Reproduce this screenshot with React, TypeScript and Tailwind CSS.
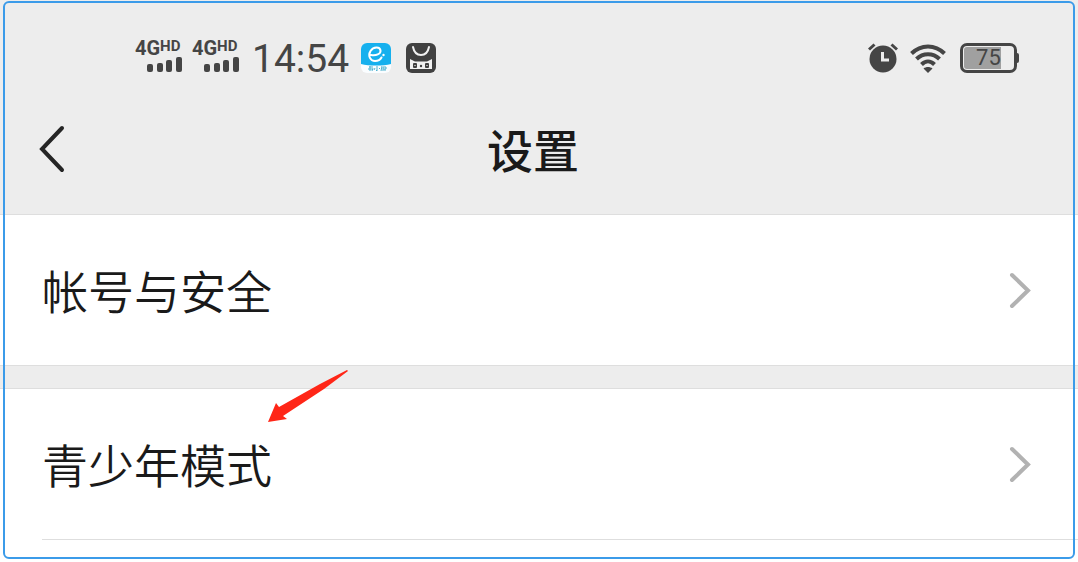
const SignalIcon = () => (
  <div className="flex w-12 flex-col pb-1">
    <div className="flex items-start font-bold">
      <span className="text-[20px] leading-4">4G</span>
      <span className="text-[15px] leading-3">HD</span>
    </div>
    <svg width="48" height="16" viewBox="0 0 48 16" fill="currentColor" aria-hidden="true">
      <rect x="12" y="8" width="6" height="8" rx="2" />
      <rect x="22" y="7" width="6" height="9" rx="2" />
      <rect x="31" y="4" width="6" height="12" rx="2" />
      <rect x="41" y="1" width="6" height="15" rx="2" />
    </svg>
  </div>
)

const CloudAppIcon = () => (
  <svg width="30" height="30" viewBox="0 0 30 30" aria-hidden="true">
    <rect width="30" height="30" rx="6" fill="#fafdff" />
    <path d="M6 0h18a6 6 0 0 1 6 6v15c-8 2-22 2-30 0V6a6 6 0 0 1 6-6z" fill="#16b0ee" />
    <path d="M10 12c5 1 10-1 9.500-4.500C19 3.500 12.500 3.500 9.500 8C6.500 13 9.500 18 14 18c3 0 5.500-1.500 6.500-3.500" fill="none" stroke="#fff" strokeWidth="2" strokeLinecap="round" />
    <circle cx="22.500" cy="12" r="1.200" fill="#fff" />
    <path d="M8 24h4M9 23v5M7 26h4M12 25l-1 3M16 23v5l-1-1M14 25l-1 2M18 25l1 1M21 23l-1 5M22 24h3v2h-3zM21 27h4" fill="none" stroke="#4fb3d0" strokeWidth="1" />
  </svg>
)

const BagAppIcon = () => (
  <svg width="30" height="30" viewBox="0 0 30 30" aria-hidden="true">
    <rect width="30" height="30" rx="6" fill="#414141" />
    <path d="M7 4c1 5 4 8 8 8s7-3 8-8" fill="none" stroke="#f2f2f2" strokeWidth="2" strokeLinecap="round" />
    <path d="M4 16l5 2.500h12l5-2.500v10H4z" fill="#f2f2f2" />
    <rect x="7" y="20" width="4" height="5" rx="1" fill="#414141" />
    <rect x="19" y="20" width="4" height="5" rx="1" fill="#414141" />
    <path d="M8 22.500h2M20 22.500h2" stroke="#a8a8a8" />
    <circle cx="15" cy="23" r="1.200" fill="#414141" />
  </svg>
)

const AlarmIcon = () => (
  <svg width="30" height="30" viewBox="0 0 30 30" fill="none" stroke="#454545" aria-hidden="true">
    <circle cx="15" cy="16" r="13.500" fill="#454545" stroke="none" />
    <path d="M1 6.500l5.500-5M23.500 1.500l5.500 5" strokeWidth="3" />
    <path d="M14.500 9v8h6.500" stroke="#ededed" strokeWidth="3" />
  </svg>
)

const WifiIcon = () => (
  <svg width="36" height="30" viewBox="0 0 36 30" fill="none" stroke="#454545" strokeWidth="4" aria-hidden="true">
    <path d="M1.500 10.500C11 1 25 1 34.500 10.500" />
    <path d="M6.500 16c6.500-6.500 16.500-6.500 23 0" />
    <path d="M11.500 21.500c4-4 9-4 13 0" />
    <path d="M18 30l-4.500-4.500c2.500-2 6.500-2 9 0z" fill="#454545" stroke="none" />
  </svg>
)

const Battery = () => (
  <div className="flex items-center">
    <div className="flex h-[30px] w-[57px] rounded-[7px] border-3 border-[#454545] p-px">
      <div className="flex w-3/4 items-center justify-end rounded-l-[3px] bg-[#a0a0a0] text-[22px] leading-6">75</div>
    </div>
    <span className="h-[10px] w-[2px] rounded-r-sm bg-[#454545]" />
  </div>
)

const StatusBar = () => (
  <div className="flex h-20 items-center justify-between pt-9 pr-[59px] pl-[135px] font-[Roboto,sans-serif] text-[#454545]">
    <div className="flex items-center">
      <div className="flex gap-[9px]">
        <SignalIcon />
        <SignalIcon />
      </div>
      <span className="mr-3 ml-3 pt-[2px] text-[39px] leading-10">14:54</span>
      <div className="flex gap-[15px]">
        <CloudAppIcon />
        <BagAppIcon />
      </div>
    </div>
    <div className="flex items-center">
      <AlarmIcon />
      <span className="ml-3">
        <WifiIcon />
      </span>
      <span className="ml-[14px]">
        <Battery />
      </span>
    </div>
  </div>
)

const SettingsRow = ({ label }: { label: string }) => (
  <button type="button" className="flex h-[150px] w-full items-center justify-between pr-[47px] pl-[42px] text-left text-[46px] leading-[60px] font-[350]">
    <span className="pb-[2px]">{label}</span>
    <svg width="22" height="38" viewBox="0 0 22 38" fill="none" stroke="#b2b2b2" strokeWidth="4" strokeLinecap="round" aria-hidden="true">
      <path d="M3 4l16 15.500L3 35" />
    </svg>
  </button>
)

const PointerArrow = () => (
  <svg className="pointer-events-none absolute -top-5 left-[268px]" width="80" height="54" viewBox="0 0 80 54" aria-hidden="true">
    <path d="M79 1L52 15L11 38L8 34L0 53L19 50L15 47L56 20L80 2z" fill="#ff2617" />
  </svg>
)

export default function App() {
  return (
    <div className="relative min-h-screen bg-white font-['Noto_Sans_CJK_SC',sans-serif] text-[#1a1a1a]">
      <header className="border-b border-[#dedede] bg-[#ededed]">
        <StatusBar />
        <nav className="grid h-[134px] grid-cols-[1fr_auto_1fr] items-center pt-1 pr-[50px] pl-[38px]">
          <button type="button" aria-label="返回" className="w-7">
            <svg width="28" height="48" viewBox="0 0 28 48" fill="none" stroke="#252525" strokeWidth="4" strokeLinecap="round" aria-hidden="true">
              <path d="M24 3L4 24l20 21" />
            </svg>
          </button>
          <h1 className="pb-[2px] text-[46px] leading-[60px] font-medium">设置</h1>
        </nav>
      </header>
      <main>
        <SettingsRow label="帐号与安全" />
        <div className="h-6 border-y border-[#dedede] bg-[#ededed]" />
        <div className="relative">
          <SettingsRow label="青少年模式" />
          <PointerArrow />
        </div>
        <hr className="ml-[42px] border-[#dedede]" />
      </main>
      <div className="pointer-events-none absolute inset-x-[3px] top-px bottom-[3px] rounded-md border-2 border-[#3b9be9]" />
    </div>
  )
}
